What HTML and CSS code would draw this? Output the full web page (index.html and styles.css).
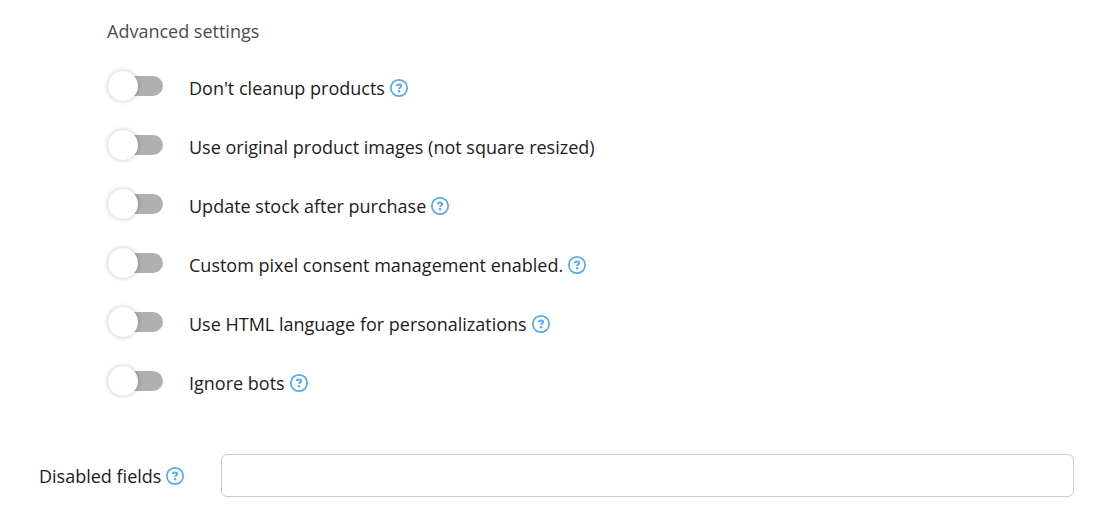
FILE: index.html
```html
<!DOCTYPE html>
<html lang="en">
<head>
    <meta charset="utf-8">
    <title>Advanced settings</title>
    <link rel="stylesheet" href="styles.css">
</head>
<body>
    <!-- Help icon, shared by all rows -->
    <svg class="hidden">
        <symbol id="help" viewBox="0 0 20 20">
            <circle cx="10" cy="10" r="8.2" fill="none" stroke="currentColor" stroke-width="1.7"/>
            <path d="M7.8 8.2C7.9 7 8.8 6.5 10 6.5s2.2.6 2.2 1.6c0 1.4-2.1 1.4-2.1 2.9" fill="none" stroke="currentColor" stroke-width="1.9"/>
            <circle cx="10.1" cy="13.2" r="1.2" fill="currentColor"/>
        </symbol>
    </svg>

    <form class="settings">
        <div class="advanced">
            <h2>Advanced settings</h2>
            <div class="setting">
                <input type="checkbox" id="cleanup" class="switch">
                <label for="cleanup">Don't cleanup products</label>
                <svg class="help"><use href="#help"/></svg>
            </div>
            <div class="setting">
                <input type="checkbox" id="images" class="switch">
                <label for="images">Use original product images (not square resized)</label>
            </div>
            <div class="setting">
                <input type="checkbox" id="stock" class="switch">
                <label for="stock">Update stock after purchase</label>
                <svg class="help"><use href="#help"/></svg>
            </div>
            <div class="setting">
                <input type="checkbox" id="consent" class="switch">
                <label for="consent">Custom pixel consent management enabled.</label>
                <svg class="help"><use href="#help"/></svg>
            </div>
            <div class="setting">
                <input type="checkbox" id="language" class="switch">
                <label for="language">Use HTML language for personalizations</label>
                <svg class="help"><use href="#help"/></svg>
            </div>
            <div class="setting">
                <input type="checkbox" id="bots" class="switch">
                <label for="bots">Ignore bots</label>
                <svg class="help"><use href="#help"/></svg>
            </div>
        </div>

        <div class="field">
            <div class="field-label">
                <label for="disabledFields">Disabled fields</label>
                <svg class="help"><use href="#help"/></svg>
            </div>
            <input type="text" id="disabledFields">
        </div>
    </form>
</body>
</html>
```
FILE: styles.css
```css
body {
    margin: 0;
    background-color: #fff;
    color: #212121;
    font-family: "Open Sans", sans-serif;
    font-size: 18px;
    font-weight: 500;
    line-height: 26px;
}

.hidden {
    display: none;
}

.settings {
    padding: 18px 21px 16px 39px;
}

.advanced {
    margin-left: 68px;
}

.advanced h2 {
    margin: 0 0 14px;
    color: #474c52;
    font-size: 18px;
    font-weight: 500;
}

.setting {
    display: flex;
    align-items: center;
    height: 59px;
}

.switch {
    appearance: none;
    flex: none;
    width: 55px;
    height: 20px;
    margin: 0 26px 3px 1px;
    border-radius: 10px;
    background-color: #b0b0b0;
    cursor: pointer;
}

.switch::before {
    content: "";
    display: block;
    width: 30px;
    height: 30px;
    margin-top: -5px;
    border-radius: 50%;
    background-color: #fff;
    box-shadow: 0 0 5px rgba(0, 0, 0, 0.25);
}

.switch:checked {
    background-color: #8fc8ee;
}

.switch:checked::before {
    margin-left: 25px;
}

.help {
    flex: none;
    width: 20px;
    height: 20px;
    margin-left: 4px;
    color: #55a9e6;
}

.field {
    display: flex;
    align-items: center;
    margin-top: 42px;
}

.field-label {
    display: flex;
    align-items: center;
    width: 182px;
}

.field input {
    flex: 1;
    box-sizing: border-box;
    height: 43px;
    padding: 0 12px;
    border: 1px solid #ccc;
    border-radius: 6px;
    font: inherit;
}
```
